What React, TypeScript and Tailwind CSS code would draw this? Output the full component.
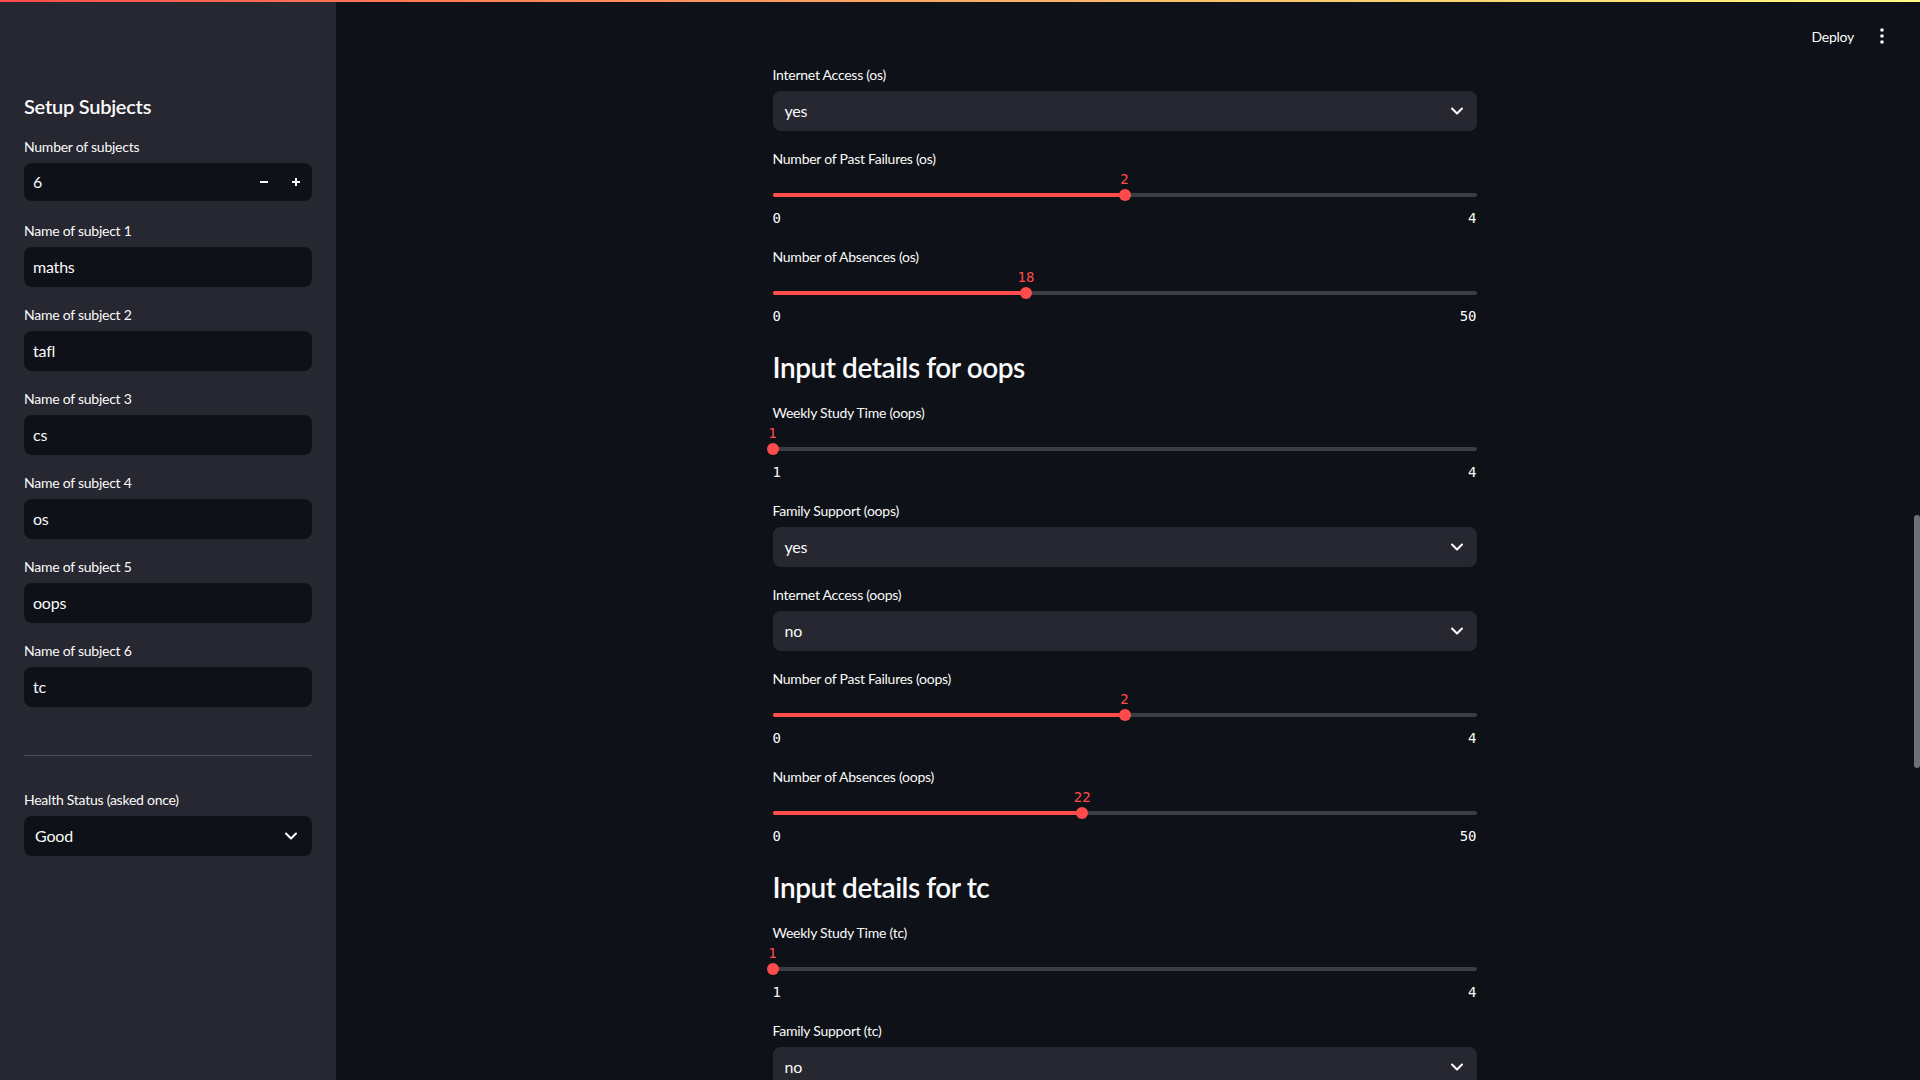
import React from "react";
import { ChevronDown } from "lucide-react";

const sans = "[font-family:Lato,'Noto_Sans',sans-serif]";
const mono = "[font-family:'DejaVu_Sans_Mono','Liberation_Mono',monospace]";

function Label({ children }: { children: React.ReactNode }) {
  return <div className="h-[22px] text-[14px] leading-[22px] tracking-[-0.25px] text-[#fafafa]">{children}</div>;
}

function MainSelect({ label, value }: { label: string; value: string }) {
  return (
    <div className="flex flex-col">
      <Label>{label}</Label>
      <div className="mt-[5px] mb-[1px] flex h-[40px] items-center justify-between rounded-lg bg-[#262730] pl-3 pr-[10px] text-[16px] tracking-[-0.2px] text-[#fafafa]">
        <span>{value}</span>
        <ChevronDown size={20} strokeWidth={2.5} />
      </div>
    </div>
  );
}

function Slider({ label, min, max, value }: { label: string; min: number; max: number; value: number }) {
  const pct = ((value - min) / (max - min)) * 100;
  return (
    <div className="flex flex-col">
      <Label>{label}</Label>
      <div className="relative h-[36px]">
        <div className="absolute left-0 right-0 top-[23px] h-[4px] rounded-full bg-[#3b3d45]" />
        <div className="absolute left-0 top-[23px] h-[4px] rounded-full bg-[#ff4b4b]" style={{ width: `${pct}%` }} />
        <div className="absolute top-[19px] h-3 w-3 -translate-x-1/2 rounded-full bg-[#ff4b4b]" style={{ left: `${pct}%` }} />
        <div
          className={`absolute top-0 h-[18px] -translate-x-1/2 text-[14px] leading-[18px] text-[#ff4b4b] ${mono}`}
          style={{ left: `${pct}%` }}
        >
          {value}
        </div>
      </div>
      <div className={`flex h-[24px] justify-between text-[14px] leading-[24px] text-[#fafafa] ${mono}`}>
        <span>{min}</span>
        <span>{max}</span>
      </div>
    </div>
  );
}

function Heading({ children }: { children: React.ReactNode }) {
  return (
    <div className="h-[42px] pt-[6px]">
      <h3 className="text-[28px] font-semibold leading-[34px] tracking-[-0.45px] text-[#fafafa]">{children}</h3>
    </div>
  );
}

function TextInput({ label, value }: { label: string; value: string }) {
  return (
    <div className="flex flex-col">
      <Label>{label}</Label>
      <div className="mt-[5px] mb-[1px] flex h-[40px] items-center rounded-lg bg-[#0e1117] pl-[9px] text-[16px] tracking-[-0.2px] text-[#fafafa]">
        {value}
      </div>
    </div>
  );
}

function NumberInput({ label, value }: { label: string; value: string }) {
  return (
    <div className="flex flex-col">
      <Label>{label}</Label>
      <div className="mt-[5px] mb-[3px] flex h-[38px] items-center rounded-lg bg-[#0e1117] text-[16px] text-[#fafafa]">
        <span className="flex-1 pl-[9px]">{value}</span>
        <div className="flex h-full w-8 items-center justify-center">
          <svg width="8" height="8" viewBox="0 0 8 8">
            <rect x="0" y="3" width="8" height="2" fill="#fafafa" />
          </svg>
        </div>
        <div className="flex h-full w-8 items-center justify-center">
          <svg width="8" height="8" viewBox="0 0 8 8">
            <rect x="0" y="3" width="8" height="2" fill="#fafafa" />
            <rect x="3" y="0" width="2" height="8" fill="#fafafa" />
          </svg>
        </div>
      </div>
    </div>
  );
}

function SideSelect({ label, value }: { label: string; value: string }) {
  return (
    <div className="flex flex-col">
      <Label>{label}</Label>
      <div className="mt-[5px] flex h-[40px] items-center justify-between rounded-lg bg-[#0e1117] pl-[11px] pr-[11px] text-[16px] tracking-[-0.2px] text-[#fafafa]">
        <span>{value}</span>
        <ChevronDown size={20} strokeWidth={2.5} />
      </div>
    </div>
  );
}

export default function App() {
  const subjects = ["maths", "tafl", "cs", "os", "oops", "tc"];
  return (
    <div className={`relative flex h-screen w-full overflow-hidden bg-[#0e1117] text-[#fafafa] ${sans}`}>
      <div className="absolute left-0 right-0 top-0 z-20 h-[2px] bg-linear-to-r from-[#ff4b4b] to-[#fffd80]" />

      <aside className="flex w-[336px] shrink-0 flex-col bg-[#262730] px-6 pt-[92px]">
        <h2 className="h-[28px] text-[20px] font-semibold leading-[28px] tracking-[-0.25px] text-[#fafafa]">Setup Subjects</h2>
        <div className="mt-4 flex flex-col gap-4">
          <NumberInput label="Number of subjects" value="6" />
          {subjects.map((s, i) => (
            <TextInput key={s} label={`Name of subject ${i + 1}`} value={s} />
          ))}
          <div className="mt-[31px] h-px bg-[#4b4c55]" />
          <div className="mt-[17px]">
            <SideSelect label="Health Status (asked once)" value="Good" />
          </div>
        </div>
      </aside>

      <main className="relative flex-1 overflow-hidden pr-[7px]">
        <div className="absolute right-[36px] top-[26px] z-10 flex h-[20px] items-center">
          <span className="text-[14px] tracking-[-0.25px] text-[#fafafa]">Deploy</span>
          <svg className="ml-[26px]" width="4" height="16" viewBox="0 0 4 16">
            <circle cx="2" cy="2" r="1.8" fill="#fafafa" />
            <circle cx="2" cy="8" r="1.8" fill="#fafafa" />
            <circle cx="2" cy="14" r="1.8" fill="#fafafa" />
          </svg>
        </div>

        <div className="mx-auto flex w-[704px] flex-col gap-4 pt-[64px]">
          <MainSelect label="Internet Access (os)" value="yes" />
          <Slider label="Number of Past Failures (os)" min={0} max={4} value={2} />
          <Slider label="Number of Absences (os)" min={0} max={50} value={18} />
          <Heading>Input details for oops</Heading>
          <Slider label="Weekly Study Time (oops)" min={1} max={4} value={1} />
          <MainSelect label="Family Support (oops)" value="yes" />
          <MainSelect label="Internet Access (oops)" value="no" />
          <Slider label="Number of Past Failures (oops)" min={0} max={4} value={2} />
          <Slider label="Number of Absences (oops)" min={0} max={50} value={22} />
          <Heading>Input details for tc</Heading>
          <Slider label="Weekly Study Time (tc)" min={1} max={4} value={1} />
          <MainSelect label="Family Support (tc)" value="no" />
          <MainSelect label="Internet Access (tc)" value="yes" />
        </div>
      </main>

      <div className="absolute right-0 top-[515px] z-20 h-[253px] w-[6px] rounded-full bg-[#6e7076]" />
    </div>
  );
}
